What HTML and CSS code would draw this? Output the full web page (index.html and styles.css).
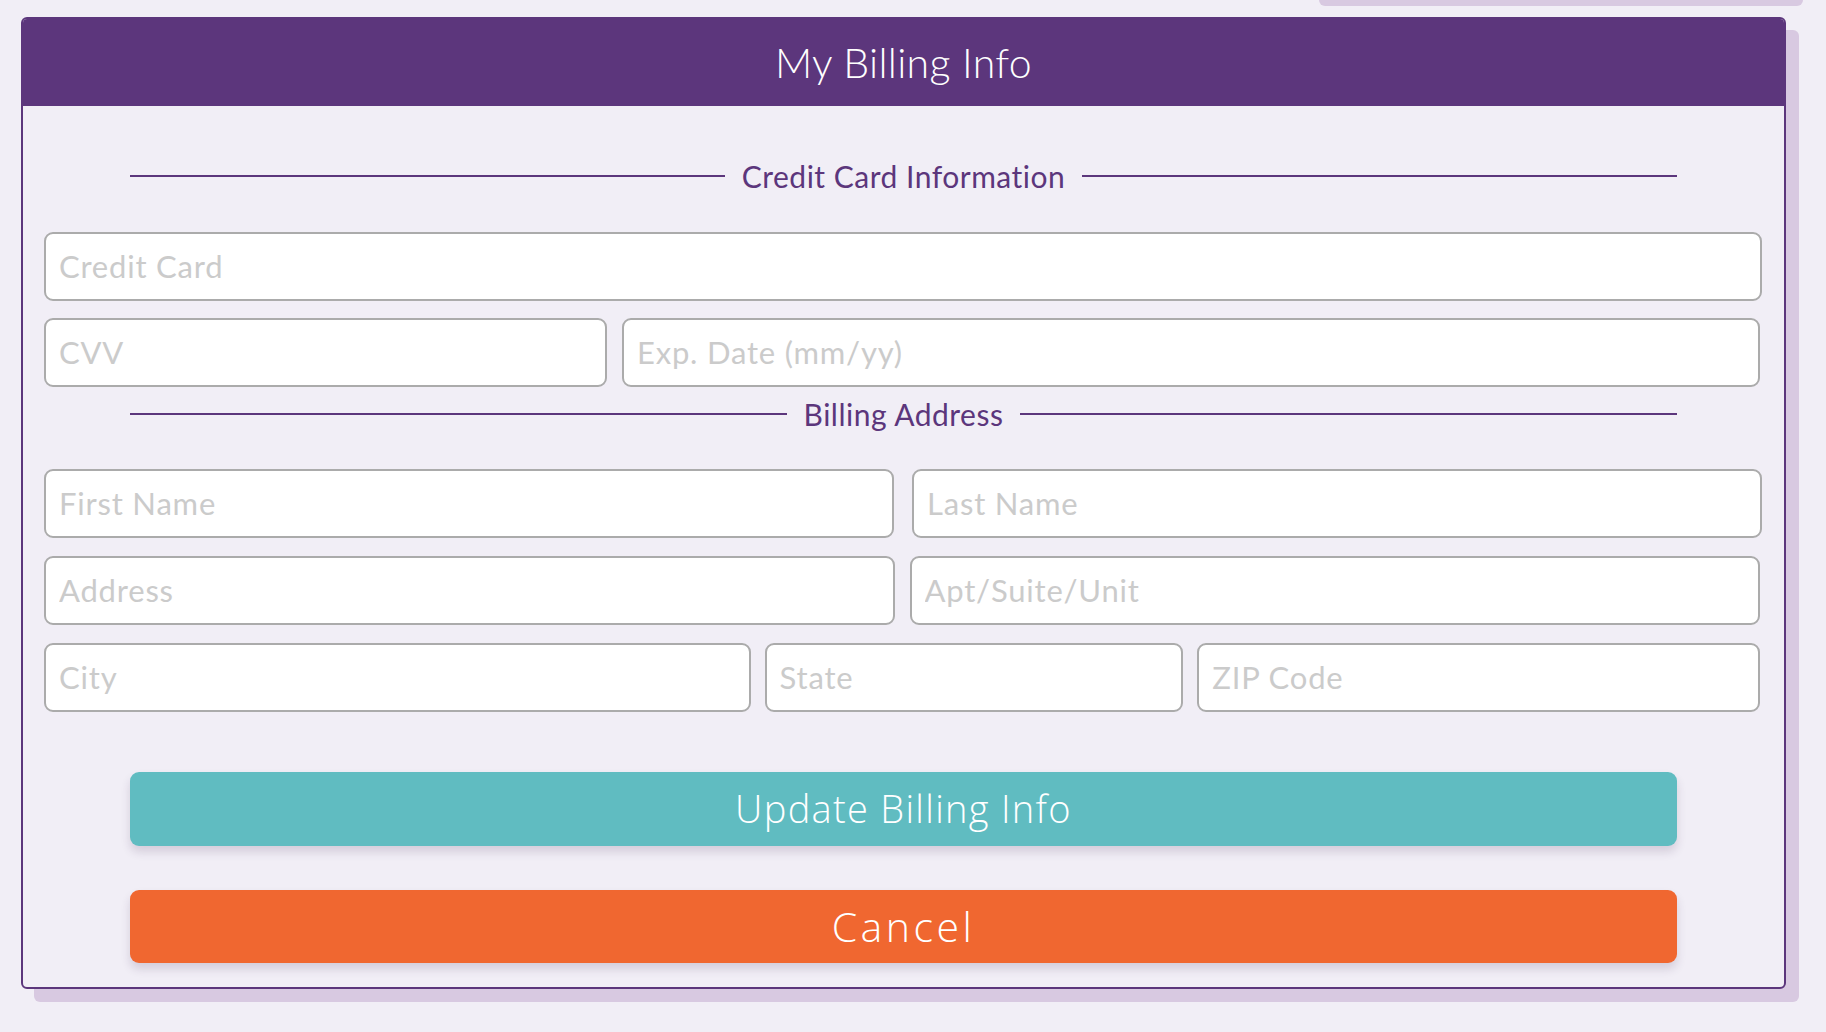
FILE: index.html
```html
<!DOCTYPE html>
<html lang="en">
<head>
<meta charset="utf-8">
<title>My Billing Info</title>
<link rel="stylesheet" href="styles.css">
</head>
<body>
<div class="page">
  <div class="back-strip"></div>
  <div class="card">
    <div class="card-header">
      <h1 class="card-title">My Billing Info</h1>
    </div>
    <form class="card-body">
      <div class="divider divider-first"><span class="divider-text">Credit Card Information</span></div>
      <div class="group group-card">
        <div class="row row-one"><input class="field" type="text" placeholder="Credit Card"></div>
        <div class="row row-cvv narrow"><input class="field" type="text" placeholder="CVV"><input class="field" type="text" placeholder="Exp. Date (mm/yy)"></div>
      </div>
      <div class="divider divider-second"><span class="divider-text">Billing Address</span></div>
      <div class="group group-address">
        <div class="row row-half"><input class="field" type="text" placeholder="First Name"><input class="field" type="text" placeholder="Last Name"></div>
        <div class="row row-half tight narrow"><input class="field" type="text" placeholder="Address"><input class="field" type="text" placeholder="Apt/Suite/Unit"></div>
        <div class="row row-city narrow"><input class="field" type="text" placeholder="City"><input class="field" type="text" placeholder="State"><input class="field" type="text" placeholder="ZIP Code"></div>
      </div>
      <div class="actions">
        <button type="button" class="btn btn-update">Update Billing Info</button>
        <button type="button" class="btn btn-cancel">Cancel</button>
      </div>
    </form>
  </div>
</div>
</body>
</html>
```

FILE: styles.css
```css
* { box-sizing: border-box; }

html, body {
  margin: 0;
  padding: 0;
  background: #f1eef6;
}

body {
  font-family: Lato, "Open Sans", Arial, sans-serif;
  color: #5c367c;
}

.page {
  width: 1826px;
  height: 1032px;
  padding-left: 21px;
  overflow: hidden;
}

.back-strip {
  height: 6px;
  width: 484px;
  margin-left: 1298px;
  background: #d8c9e1;
  border-radius: 0 0 6px 6px;
}

.card {
  margin-top: 11px;
  width: 1765px;
  height: 972px;
  border: 2px solid #5c367c;
  border-radius: 6px;
  background: #f1eef6;
  box-shadow: 13px 13px 0 0 #d8c9e1;
  overflow: hidden;
}

.card-header {
  height: 89px;
  margin: -2px -2px 0;
  background: #5c367c;
  display: flex;
  align-items: center;
  justify-content: center;
}

.card-title {
  margin: 0;
  padding-top: 2px;
  font-weight: 300;
  font-size: 41px;
  color: #ffffff;
  letter-spacing: 0.3px;
}

.card-body {
  padding: 55px 22px 0 21px;
  margin: 0;
}

.divider {
  height: 30px;
  margin: 0 85px 0 86px;
  display: flex;
  align-items: center;
}

.divider::before,
.divider::after {
  content: "";
  flex: 1;
  height: 2px;
  background: #5c367c;
}

.divider-text {
  padding: 0 17px;
  font-size: 30px;
  line-height: 30px;
  letter-spacing: 0.5px;
  color: #5c367c;
  white-space: nowrap;
}

.divider-first { margin-bottom: 41px; }
.divider-second { margin-top: 12px; margin-bottom: 40px; }

.group {
  display: flex;
  flex-direction: column;
}

.group-card { gap: 17px; }
.group-address { gap: 18px; }

.row {
  display: grid;
  grid-template-columns: 1fr;
}

.row.narrow { margin-right: 2px; }

.row-cvv {
  grid-template-columns: 563fr 1138fr;
  column-gap: 15px;
}

.row-half {
  grid-template-columns: 1fr 1fr;
  column-gap: 18px;
}

.row-half.tight { column-gap: 15px; }

.row-city {
  grid-template-columns: 707fr 419fr 563fr;
  column-gap: 14px;
}

.field {
  display: block;
  width: 100%;
  height: 69px;
  margin: 0;
  padding: 0 13px 2px;
  background: #ffffff;
  border: 2px solid #ababab;
  border-radius: 9px;
  font-family: Lato, "Open Sans", Arial, sans-serif;
  font-size: 31px;
  letter-spacing: 0.8px;
  color: #444;
  outline: none;
}

.field::placeholder {
  color: #cbcbcb;
  opacity: 1;
}

.actions {
  margin: 60px 85px 0 86px;
  display: flex;
  flex-direction: column;
  gap: 44px;
}

.btn {
  display: block;
  width: 100%;
  height: 73px;
  padding: 0 0 2px;
  border: none;
  border-radius: 9px;
  font-family: "Open Sans", Lato, Arial, sans-serif;
  font-weight: 300;
  font-size: 38px;
  letter-spacing: 1.3px;
  color: #ffffff;
  box-shadow: 0 6px 10px rgba(60, 40, 80, 0.16);
  cursor: pointer;
}

.btn-update { background: #60bcc1; height: 74px; }
.btn-cancel { background: #f06730; font-size: 41px; letter-spacing: 3.5px; }
```
